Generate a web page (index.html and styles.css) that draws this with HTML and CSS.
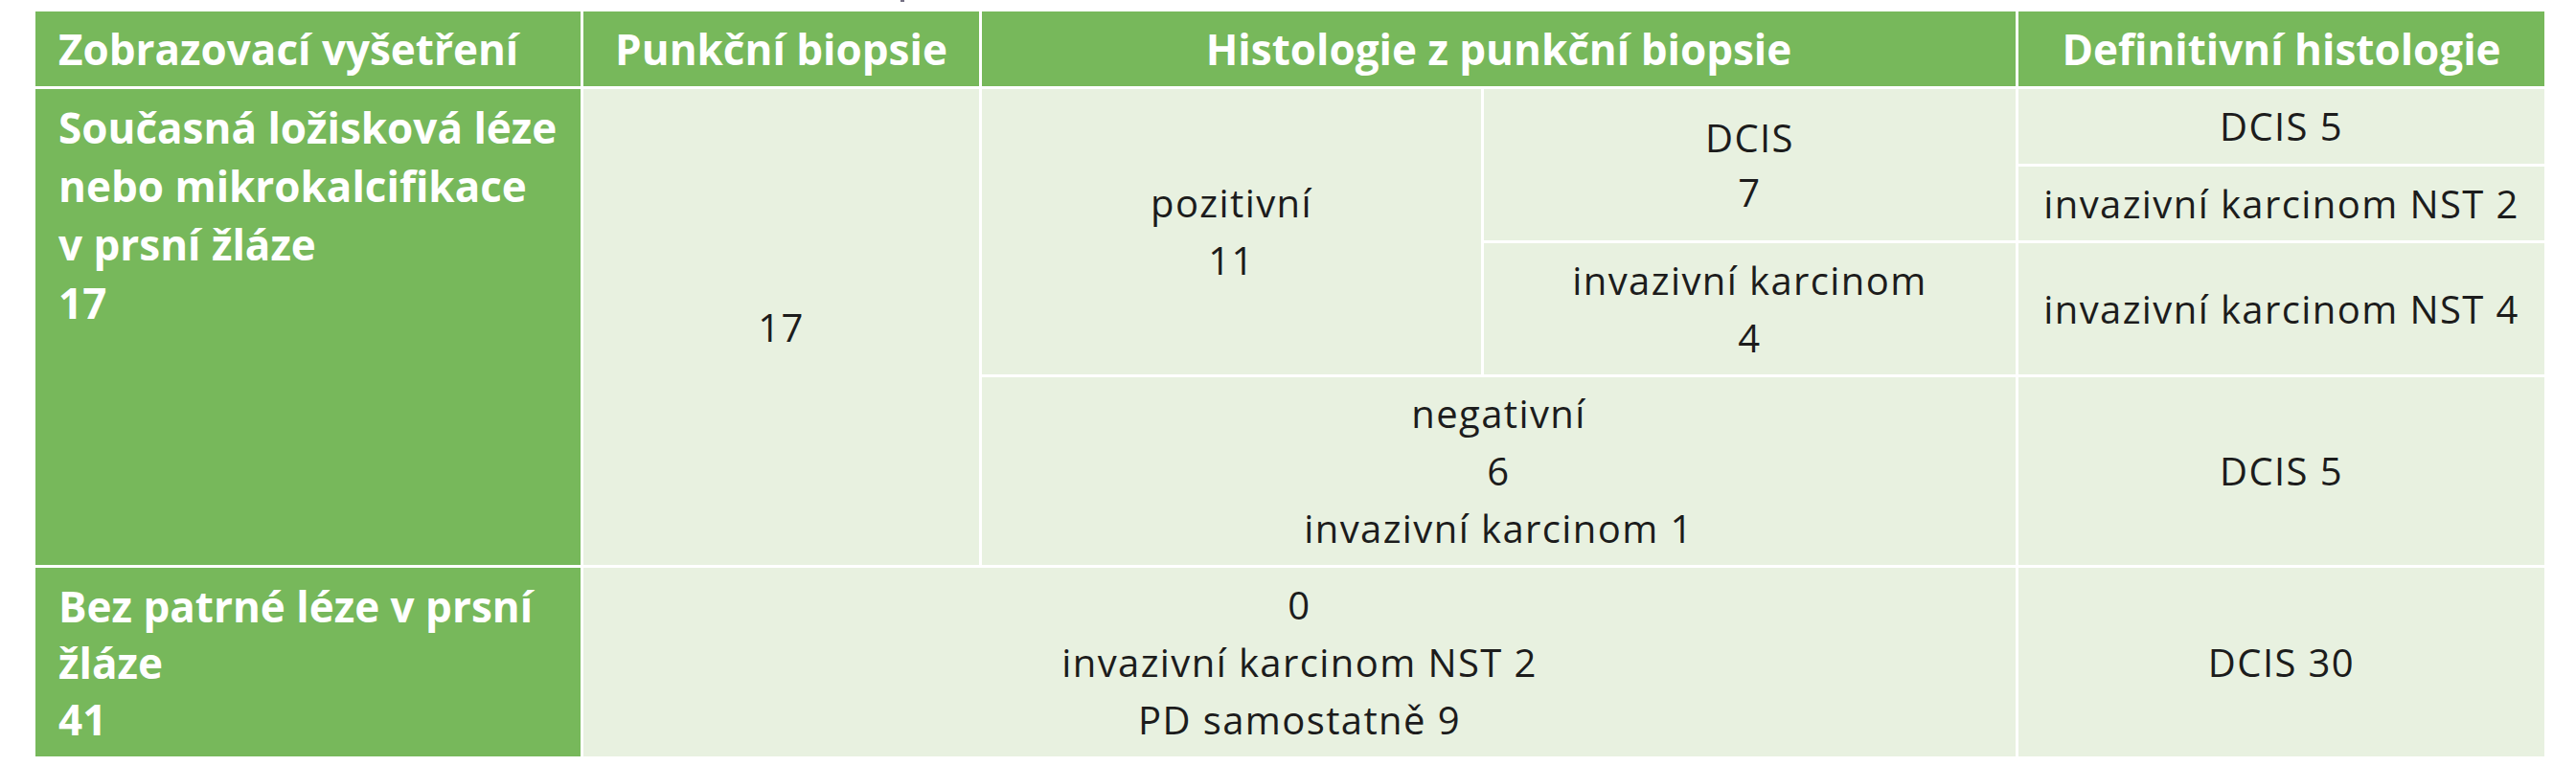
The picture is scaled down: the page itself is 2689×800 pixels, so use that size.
FILE: index.html
```html
<!DOCTYPE html>
<html lang="cs">
<head>
<meta charset="utf-8">
<title>Tabulka</title>
<link rel="stylesheet" href="styles.css">
</head>
<body>
<div class="page">
  <div class="caption-strip"><span class="caption-mark"></span></div>
  <div class="table">
    <div class="cell head head-left">Zobrazovací vyšetření</div>
    <div class="cell head">Punkční biopsie</div>
    <div class="cell head span-3a3b">Histologie z punkční biopsie</div>
    <div class="cell head">Definitivní histologie</div>

    <div class="cell side side-r1">Současná ložisková léze<br>nebo mikrokalcifikace<br>v prsní žláze<br>17</div>
    <div class="cell body c-punk">17</div>
    <div class="cell body c-poz">pozitivní<br>11</div>
    <div class="cell body c-dcis7">DCIS<br>7</div>
    <div class="cell body c-def-a">DCIS 5</div>
    <div class="cell body c-def-b">invazivní karcinom NST 2</div>
    <div class="cell body c-inv4">invazivní karcinom<br>4</div>
    <div class="cell body c-def-c">invazivní karcinom NST 4</div>
    <div class="cell body c-neg">negativní<br>6<br>invazivní karcinom 1</div>
    <div class="cell body c-def-d">DCIS 5</div>

    <div class="cell side side-r2">Bez patrné léze v prsní<br>žláze<br>41</div>
    <div class="cell body c-mid2">0<br>invazivní karcinom NST 2<br>PD samostatně 9</div>
    <div class="cell body c-def-e">DCIS 30</div>
  </div>
</div>
</body>
</html>
```
FILE: styles.css
```css
html, body {
  margin: 0;
  padding: 0;
  background: #ffffff;
}

.page {
  padding-left: 37px;
  font-family: "Open Sans", "Noto Sans", "DejaVu Sans", sans-serif;
}

.caption-strip {
  height: 12px;
  display: flex;
  align-items: flex-start;
}

.caption-mark {
  display: block;
  width: 4px;
  height: 2px;
  margin-left: 903px;
  background: #3a3550;
  opacity: 0.7;
}

.table {
  width: 2619px;
  display: grid;
  grid-template-columns: 569px 413px 521px 555px 549px;
  grid-template-rows: 78px 78px 77px 137px 196px 197px;
  gap: 3px;
  background: #ffffff;
}

.cell {
  display: flex;
  align-items: center;
  justify-content: center;
  text-align: center;
  white-space: nowrap;
}

.head {
  background: #77b85b;
  color: #ffffff;
  font-weight: 700;
  font-size: 44px;
  line-height: 58px;
}

.head-left {
  justify-content: flex-start;
  text-align: left;
  padding-left: 24px;
}

.span-3a3b {
  grid-column: 3 / 5;
}

.side {
  background: #77b85b;
  color: #ffffff;
  font-weight: 700;
  font-size: 44px;
  line-height: 59px;
  align-items: flex-start;
  justify-content: flex-start;
  text-align: left;
  padding: 11px 0 0 24px;
}

.side-r1 {
  grid-column: 1;
  grid-row: 2 / 6;
  line-height: 61px;
  padding-top: 10px;
}

.side-r2 {
  grid-column: 1;
  grid-row: 6;
}

.body {
  background: #e8f1e0;
  color: #1c1c1c;
  font-size: 40px;
  letter-spacing: 1.4px;
  line-height: 60px;
}

.c-punk { grid-column: 2; grid-row: 2 / 6; }
.c-poz { grid-column: 3; grid-row: 2 / 5; }
.c-dcis7 { grid-column: 4; grid-row: 2 / 4; line-height: 57px; }
.c-def-a { grid-column: 5; grid-row: 2; }
.c-def-b { grid-column: 5; grid-row: 3; }
.c-inv4 { grid-column: 4; grid-row: 4; }
.c-def-c { grid-column: 5; grid-row: 4; }
.c-neg { grid-column: 3 / 5; grid-row: 5; }
.c-def-d { grid-column: 5; grid-row: 5; }
.c-mid2 { grid-column: 2 / 5; grid-row: 6; }
.c-def-e { grid-column: 5; grid-row: 6; }
```
